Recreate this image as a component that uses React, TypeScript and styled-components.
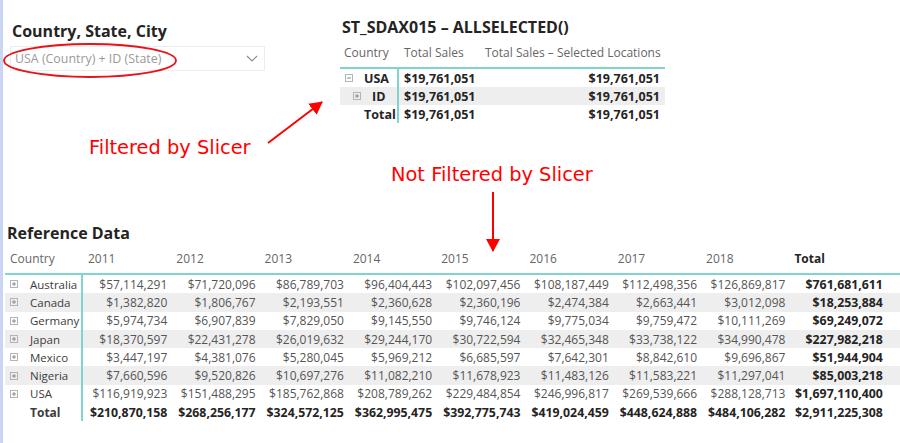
import * as React from "react";
import styled, { createGlobalStyle } from "styled-components";

const GlobalStyle = createGlobalStyle`
  html, body {
    margin: 0;
    padding: 0;
    background: #ffffff;
  }
  body {
    font-family: "Open Sans", "Noto Sans", sans-serif;
  }
`;

const TEAL = "#7fd4ce";

const years = ["2011", "2012", "2013", "2014", "2015", "2016", "2017", "2018"];

const refRows = [
  {
    name: "Australia",
    values: ["$57,114,291", "$71,720,096", "$86,789,703", "$96,404,443", "$102,097,456", "$108,187,449", "$112,498,356", "$126,869,817"],
    total: "$761,681,611",
  },
  {
    name: "Canada",
    values: ["$1,382,820", "$1,806,767", "$2,193,551", "$2,360,628", "$2,360,196", "$2,474,384", "$2,663,441", "$3,012,098"],
    total: "$18,253,884",
  },
  {
    name: "Germany",
    values: ["$5,974,734", "$6,907,839", "$7,829,050", "$9,145,550", "$9,746,124", "$9,775,034", "$9,759,472", "$10,111,269"],
    total: "$69,249,072",
  },
  {
    name: "Japan",
    values: ["$18,370,597", "$22,431,278", "$26,019,632", "$29,244,170", "$30,722,594", "$32,465,348", "$33,738,122", "$34,990,478"],
    total: "$227,982,218",
  },
  {
    name: "Mexico",
    values: ["$3,447,197", "$4,381,076", "$5,280,045", "$5,969,212", "$6,685,597", "$7,642,301", "$8,842,610", "$9,696,867"],
    total: "$51,944,904",
  },
  {
    name: "Nigeria",
    values: ["$7,660,596", "$9,520,826", "$10,697,276", "$11,082,210", "$11,678,923", "$11,483,126", "$11,583,221", "$11,297,041"],
    total: "$85,003,218",
  },
  {
    name: "USA",
    values: ["$116,919,923", "$151,488,295", "$185,762,868", "$208,789,262", "$229,484,854", "$246,996,817", "$269,539,666", "$288,128,713"],
    total: "$1,697,110,400",
  },
];

const refTotals = {
  values: ["$210,870,158", "$268,256,177", "$324,572,125", "$362,995,475", "$392,775,743", "$419,024,459", "$448,624,888", "$484,106,282"],
  total: "$2,911,225,308",
};

// expand / collapse box used in the matrix rows
function ExpandIcon({ open }: { open?: boolean }) {
  return (
    <svg width="8" height="8" viewBox="0 0 8 8">
      <rect x="0.5" y="0.5" width="7" height="7" fill="none" stroke="#b4b4b4" />
      <line x1="2" y1="4" x2="6" y2="4" stroke="#8a8a8a" />
      {!open && <line x1="4" y1="2" x2="4" y2="6" stroke="#8a8a8a" />}
    </svg>
  );
}

export default function App() {
  return (
    <Page>
      <GlobalStyle />
      <TopRow>
        <Slicer>
          <PanelTitle>Country, State, City</PanelTitle>
          <Dropdown>
            <span>USA (Country) + ID (State)</span>
            <svg width="12" height="7" viewBox="0 0 12 7">
              <polyline points="1,1 6,6 11,1" fill="none" stroke="#8c8c8c" strokeWidth="1.1" />
            </svg>
          </Dropdown>
        </Slicer>

        <TopTable>
          <PanelTitle>ST_SDAX015 – ALLSELECTED()</PanelTitle>
          <TopHeader>
            <HeadCell $pad={4}>Country</HeadCell>
            <HeadCell $pad={5}>Total Sales</HeadCell>
            <HeadCell $pad={5}>Total Sales – Selected Locations</HeadCell>
          </TopHeader>
          <TopRowLine>
            <TopName $indent={5}>
              <ExpandIcon open />
              <span>USA</span>
            </TopName>
            <TopValue>$19,761,051</TopValue>
            <TopValue $right>$19,761,051</TopValue>
          </TopRowLine>
          <TopRowLine $shade>
            <TopName $indent={13}>
              <ExpandIcon />
              <span>ID</span>
            </TopName>
            <TopValue>$19,761,051</TopValue>
            <TopValue $right>$19,761,051</TopValue>
          </TopRowLine>
          <TopRowLine>
            <TopName $indent={24}>
              <span>Total</span>
            </TopName>
            <TopValue>$19,761,051</TopValue>
            <TopValue $right>$19,761,051</TopValue>
          </TopRowLine>
        </TopTable>
      </TopRow>

      <Notes>
        <Note $indent={86}>Filtered by Slicer</Note>
        <Note $indent={388}>Not Filtered by Slicer</Note>
      </Notes>

      <Reference>
        <PanelTitle>Reference Data</PanelTitle>
        <RefHeader>
          <RefHeadCell>Country</RefHeadCell>
          {years.map((y) => (
            <RefHeadCell key={y}>{y}</RefHeadCell>
          ))}
          <RefHeadCell $bold>Total</RefHeadCell>
        </RefHeader>
        {refRows.map((row, i) => (
          <RefRow key={row.name} $shade={i % 2 === 1}>
            <RefName>
              <ExpandIcon />
              <span>{row.name}</span>
            </RefName>
            {row.values.map((v, j) => (
              <RefValue key={j}>{v}</RefValue>
            ))}
            <RefValue $bold>{row.total}</RefValue>
          </RefRow>
        ))}
        <RefRow>
          <RefName $total>Total</RefName>
          {refTotals.values.map((v, j) => (
            <RefValue key={j} $bold>
              {v}
            </RefValue>
          ))}
          <RefValue $bold>{refTotals.total}</RefValue>
        </RefRow>
      </Reference>

      {/* red callouts drawn over the report */}
      <Callouts width="900" height="443" viewBox="0 0 900 443">
        <defs>
          <marker id="head" markerUnits="userSpaceOnUse" markerWidth="14" markerHeight="14" refX="12" refY="7" orient="auto">
            <path d="M0,0 L13,7 L0,14 z" fill="#ff0000" />
          </marker>
        </defs>
        <ellipse cx="90" cy="60.5" rx="86" ry="16.5" fill="none" stroke="#e8121a" strokeWidth="1.8" />
        <line x1="268" y1="143" x2="322" y2="102" stroke="#ff0000" strokeWidth="2" markerEnd="url(#head)" />
        <line x1="493" y1="192" x2="493" y2="251" stroke="#ff0000" strokeWidth="2" markerEnd="url(#head)" />
      </Callouts>
    </Page>
  );
}

const Page = styled.div`
  position: relative;
  box-sizing: border-box;
  width: 900px;
  height: 443px;
  border-left: 3px solid #c8d6f4;
  overflow: hidden;
  color: #252423;
`;

const TopRow = styled.div`
  display: flex;
  align-items: flex-start;
  padding-top: 16px;
`;

const Slicer = styled.div`
  margin-left: 7px;
  margin-top: 4px;
  width: 255px;
`;

const PanelTitle = styled.div`
  font-size: 16px;
  line-height: 22px;
  font-weight: 700;
  color: #252423;
  padding-left: 2px;
  white-space: nowrap;
`;

const Dropdown = styled.div`
  margin-top: 4px;
  height: 25px;
  box-sizing: border-box;
  border: 1px solid #ececec;
  display: flex;
  align-items: center;
  justify-content: space-between;
  padding: 0 6px 0 4px;
  font-size: 12.4px;
  color: #9a9a9a;
`;

const TopTable = styled.div`
  margin-left: 75px;
  width: 325px;
`;

const topCols = "59px 81px 185px";

const TopHeader = styled.div`
  display: grid;
  grid-template-columns: ${topCols};
  height: 31px;
  box-sizing: border-box;
  align-items: center;
  border-bottom: 2px solid ${TEAL};
  font-size: 12px;
  color: #666666;
`;

const HeadCell = styled.div<{ $pad: number }>`
  padding-left: ${(p) => p.$pad}px;
  white-space: nowrap;
`;

const TopRowLine = styled.div<{ $shade?: boolean }>`
  display: grid;
  grid-template-columns: ${topCols};
  height: 18px;
  align-items: stretch;
  background: ${(p) => (p.$shade ? "#eeeeee" : "transparent")};
  font-size: 12.5px;
  font-weight: 700;
  color: #252423;
`;

const TopName = styled.div<{ $indent: number }>`
  display: flex;
  align-items: center;
  gap: 11px;
  padding-left: ${(p) => p.$indent}px;
  border-right: 2px solid ${TEAL};
`;

const TopValue = styled.div<{ $right?: boolean }>`
  display: flex;
  align-items: center;
  justify-content: ${(p) => (p.$right ? "flex-end" : "flex-start")};
  padding: 0 5px;
`;

const Notes = styled.div`
  margin-top: 11px;
  font-family: "DejaVu Sans", Verdana, sans-serif;
  font-size: 19.4px;
  line-height: 27px;
  color: #ff0000;
`;

const Note = styled.div<{ $indent: number }>`
  padding-left: ${(p) => p.$indent}px;
`;

const Reference = styled.div`
  margin-top: 34px;
  margin-left: 2px;
`;

const refCols = "78px repeat(8, 88.3px) 97.5px";

const RefHeader = styled.div`
  display: grid;
  grid-template-columns: ${refCols};
  height: 31px;
  box-sizing: border-box;
  align-items: center;
  border-bottom: 2px solid ${TEAL};
  font-size: 12px;
  color: #666666;
`;

const RefHeadCell = styled.div<{ $bold?: boolean }>`
  padding-left: 5px;
  font-weight: ${(p) => (p.$bold ? 700 : 400)};
  color: ${(p) => (p.$bold ? "#252423" : "#666666")};
`;

const RefRow = styled.div<{ $shade?: boolean }>`
  display: grid;
  grid-template-columns: ${refCols};
  height: 18.3px;
  background: ${(p) => (p.$shade ? "#eeeeee" : "transparent")};
  font-size: 12px;
  color: #555555;
`;

const RefName = styled.div<{ $total?: boolean }>`
  display: flex;
  align-items: center;
  gap: 12px;
  padding-left: ${(p) => (p.$total ? "25px" : "5px")};
  border-right: 2px solid ${TEAL};
  color: #3c3c3c;
  white-space: nowrap;
  font-weight: ${(p) => (p.$total ? 700 : 400)};
  font-size: ${(p) => (p.$total ? "12px" : "11.5px")};
`;

const RefValue = styled.div<{ $bold?: boolean }>`
  display: flex;
  align-items: center;
  justify-content: flex-end;
  padding-right: 4px;
  white-space: nowrap;
  font-weight: ${(p) => (p.$bold ? 700 : 400)};
  font-size: ${(p) => (p.$bold ? "12.3px" : "12px")};
  color: ${(p) => (p.$bold ? "#252423" : "#555555")};
`;

const Callouts = styled.svg`
  position: absolute;
  left: -3px;
  top: 0;
  pointer-events: none;
`;
